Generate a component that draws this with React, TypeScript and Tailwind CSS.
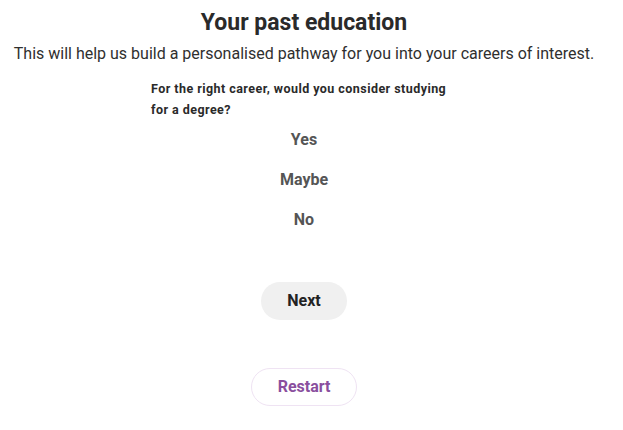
import React from 'react';

const options = ['Yes', 'Maybe', 'No'];

export default function App() {
  return (
    <div className="w-[623px] h-[430px] bg-white text-[#222] font-['Roboto',sans-serif]">
      <div className="w-[608px] flex flex-col items-center">
        <h1 className="mt-[9px] text-[23px] leading-[28px] font-bold text-[#2a2a2a]">Your past education</h1>
        <p className="mt-[5px] text-[16px] leading-[24px] text-[#2f2f2f]">
          This will help us build a personalised pathway for you into your careers of interest.
        </p>

        <div className="w-[306px] mt-[12px] flex flex-col">
          <p className="w-[300px] text-[12.5px] leading-[21px] font-bold tracking-[0.45px] text-[#2a2a2a]">
            For the right career, would you consider studying for a degree?
          </p>
          <div className="mt-[9px] flex flex-col items-center gap-[18px]">
            {options.map(o => (
              <button key={o} className="text-[16px] leading-[22px] font-bold text-[#555]">{o}</button>
            ))}
          </div>

          <div className="mt-[51px] flex justify-center">
            <button className="w-[86px] h-[38px] rounded-full bg-[#f0f0f0] text-[16px] font-bold text-[#222]">Next</button>
          </div>
          <div className="mt-[48px] flex justify-center">
            <button className="w-[106px] h-[38px] rounded-full border border-[#efe3f3] text-[16px] font-bold text-[#8a4f9e]">Restart</button>
          </div>
        </div>
      </div>
    </div>
  );
}
